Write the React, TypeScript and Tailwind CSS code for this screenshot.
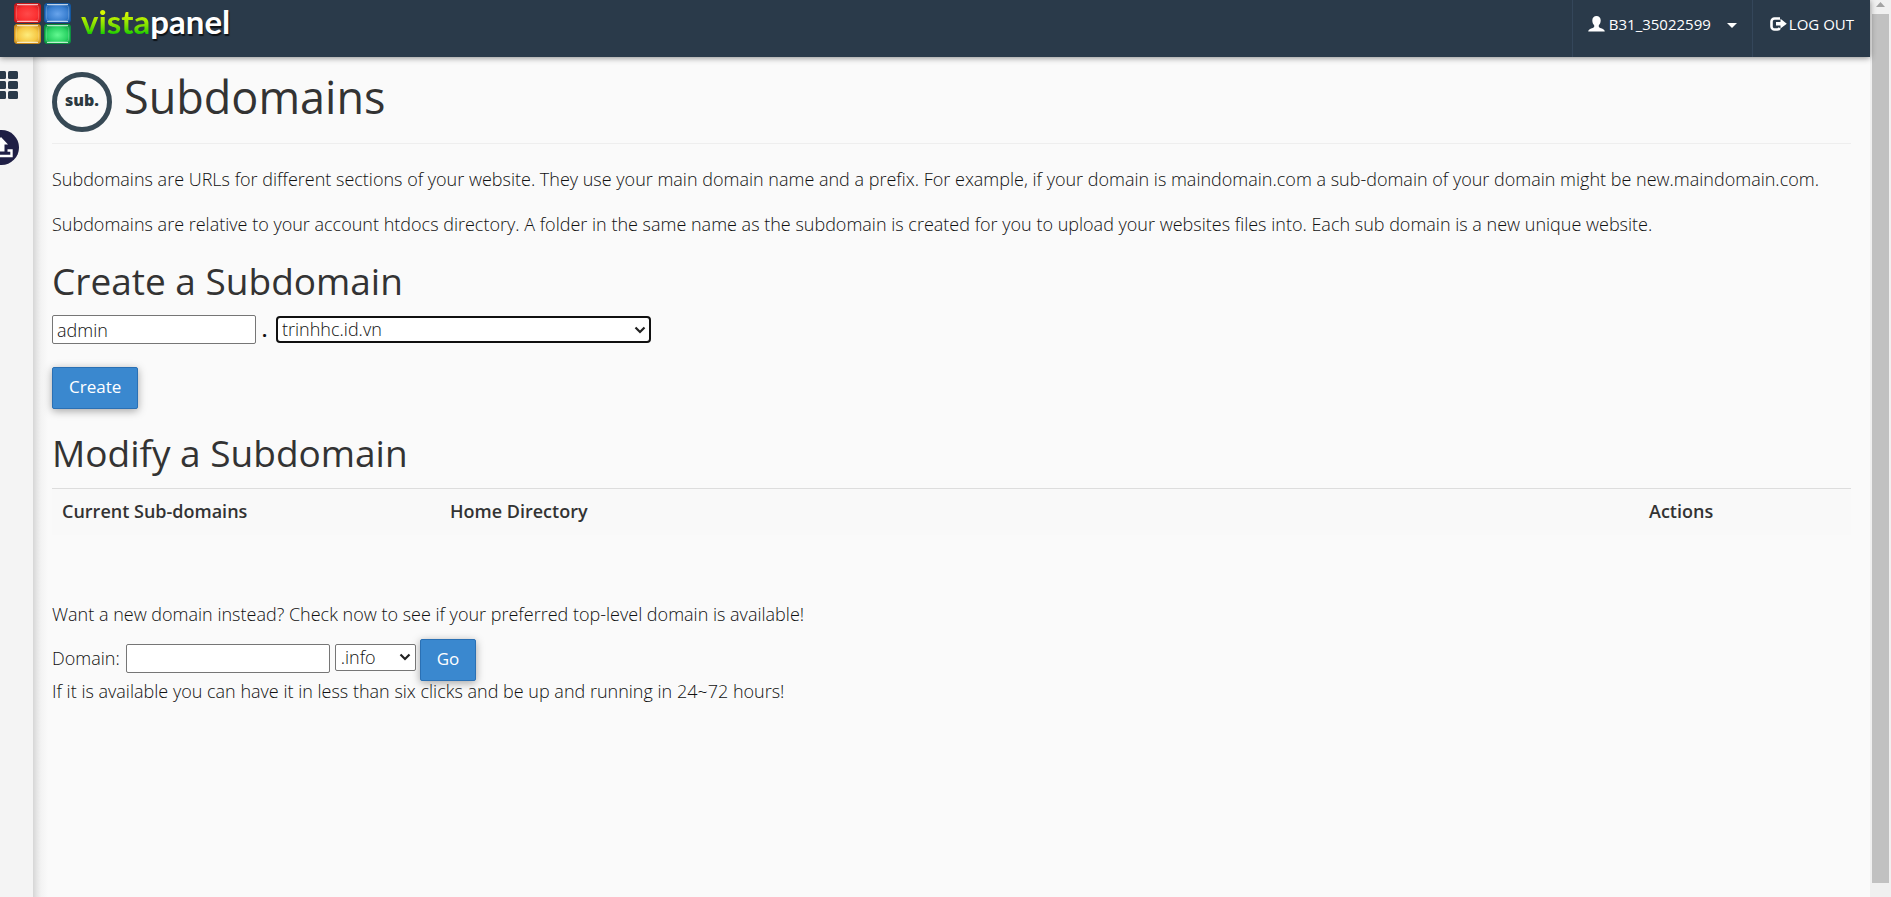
import type { ReactNode } from "react";

function VistaLogo() {
  const tiles = [
    { x: 0, y: 0, edge: "#c4191c", fill: "#fb2f31", mid: "#ff4a4a" },
    { x: 30, y: 0, edge: "#1457a0", fill: "#3a7fd0", mid: "#68a4ec" },
    { x: 0, y: 21, edge: "#c98a1c", fill: "#f6c845", mid: "#fdec7c" },
    { x: 30, y: 21, edge: "#0d9140", fill: "#2bd364", mid: "#62f890" },
  ];
  return (
    <svg width="57" height="42" viewBox="0 0 57 42" aria-hidden="true">
      {tiles.map((t, i) => (
        <g key={i}>
          <defs>
            <radialGradient id={`tile${i}`} cx="50%" cy="55%" r="65%">
              <stop offset="0" stopColor={t.mid} />
              <stop offset="0.6" stopColor={t.fill} />
              <stop offset="1" stopColor={t.edge} />
            </radialGradient>
          </defs>
          <rect x={t.x + 0.5} y={t.y + 0.5} width="26" height="19" rx="2.5" fill={`url(#tile${i})`} stroke={t.edge} />
          <path d={`M${t.x + 3} ${t.y + 1.5}h21M${t.x + 3} ${t.y + 18.5}h21`} stroke="#fff" strokeOpacity="0.7" />
          <rect x={t.x + 2.5} y={t.y + 2.5} width="22" height="15" rx="2" fill="none" stroke="#fff" strokeOpacity="0.18" />
        </g>
      ))}
    </svg>
  );
}

function UserIcon() {
  return (
    <svg width="17" height="16" viewBox="0 0 17 16" fill="currentColor" aria-hidden="true">
      <path d="M8.500 0C6 0 4.300 1.700 4.300 4.200c0 2 .7 4 1.900 5.100v1.500c-.2.700-1 1-2.300 1.500C2 13 .4 13.600.2 15.500h16.600c-.2-1.900-1.800-2.500-3.700-3.200-1.300-.5-2.100-.8-2.300-1.500V9.300c1.200-1.100 1.900-3.100 1.900-5.100C12.700 1.700 11 0 8.500 0z" />
    </svg>
  );
}

function LogoutIcon() {
  return (
    <svg width="17" height="14" viewBox="0 0 17 14" aria-hidden="true">
      <path d="M10 1.500H4.500a3 3 0 0 0-3 3v5a3 3 0 0 0 3 3H7a3 3 0 0 0 2.800-1.500" fill="none" stroke="currentColor" strokeWidth="2.600" />
      <path d="M6 5h4.500V1.800L16.800 6.700l-6.300 4.900V8.500H6z" fill="currentColor" />
    </svg>
  );
}

function GridIcon() {
  return (
    <svg width="19" height="28" viewBox="0 0 19 28" fill="#2a3a4a" aria-hidden="true">
      {[-4, 8].map((x) => [0, 10, 20].map((y) => <rect key={`${x}-${y}`} x={x} y={y} width="10" height="8" rx="1.500" />))}
    </svg>
  );
}

function UploadIcon() {
  return (
    <svg width="19" height="35" viewBox="16 0 19 35" aria-hidden="true">
      <circle cx="17.500" cy="17.500" r="17.500" fill="#1f1f45" />
      <path d="M17 7l7 7.500h-3.500v7h-7v-7H10z" fill="#fff" />
      <path d="M6.500 26h21v-5.500h-4" fill="none" stroke="#fff" strokeWidth="2.400" />
    </svg>
  );
}

function Chevron() {
  return (
    <svg
      className="pointer-events-none absolute top-1/2 right-1 -translate-y-1/2"
      width="14"
      height="10"
      viewBox="0 0 14 10"
      aria-hidden="true"
    >
      <path d="M2.500 2.500L7 7l4.500-4.500" fill="none" stroke="#222" strokeWidth="2.200" />
    </svg>
  );
}

function BlueButton({ children }: { children: ReactNode }) {
  return (
    <button
      type="button"
      className="h-[42px] rounded-xs border border-[#2a70b4] bg-[#3a88cf] px-4 pb-[2px] text-[17px] font-normal text-white shadow-[0_2px_8px_rgba(0,0,0,0.35)]"
    >
      {children}
    </button>
  );
}

export default function App() {
  return (
    <div className="flex h-screen overflow-hidden bg-[#fafafa] font-['Open_Sans',sans-serif] text-[18px] leading-[26px] font-light text-[#111]">
      <div className="flex min-w-0 flex-1 flex-col">
        <header className="relative z-10 flex h-[57px] shrink-0 justify-between bg-[#2a3a4a] shadow-[0_1px_6px_rgba(0,0,0,0.45)]">
          <a href="#" className="flex items-start gap-[10px] pt-[3px] pl-[14px]" aria-label="vistapanel">
            <VistaLogo />
            <span className="font-[Lato,sans-serif] text-[33px] leading-[37px] font-bold text-white [text-shadow:1px_2px_1px_rgba(0,0,0,0.7)]">
              <span className="bg-linear-to-b from-[#d8f800] from-30% to-[#1fd000] to-80% bg-clip-text text-transparent [text-shadow:none]">
                vista
              </span>
              panel
            </span>
          </a>
          <nav className="flex text-[15px] leading-[48px] font-medium text-white">
            <a href="#" className="flex border-l border-[#34465a] px-[15px]">
              <span className="flex items-center gap-1 self-start">
                <UserIcon />
                B31_35022599
              </span>
              <svg className="mt-[23px] ml-4" width="10" height="5" viewBox="0 0 10 5" aria-hidden="true">
                <path d="M0 0h10L5 5z" fill="#fff" />
              </svg>
            </a>
            <a href="#" className="flex border-l border-[#34465a] pr-4 pl-[17px]">
              <span className="flex items-center gap-[2px] self-start">
                <LogoutIcon />
                LOG OUT
              </span>
            </a>
          </nav>
        </header>

        <div className="flex min-h-0 flex-1">
          <aside className="flex w-[33px] shrink-0 flex-col items-start gap-[31px] bg-[#f4f4f4] pt-[14px]">
            <a href="#" aria-label="Dashboard">
              <GridIcon />
            </a>
            <a href="#" aria-label="Upload">
              <UploadIcon />
            </a>
          </aside>

          <main className="min-w-0 flex-1 bg-[linear-gradient(to_right,#d6d6d6,#e6e6e6_4px,#f3f3f3_8px,#fafafa_15px)] px-[19px] pt-[15px]">
            <div className="flex items-start gap-3 border-b border-[#eee] pb-[11px]">
              <svg width="60" height="60" viewBox="0 0 60 60" aria-hidden="true">
                <circle cx="30" cy="30" r="27.500" fill="none" stroke="#374955" strokeWidth="5" />
                <text x="30" y="34" textAnchor="middle" fontFamily="Open Sans" fontWeight="800" fontSize="16" fill="#2c3940">
                  sub.
                </text>
              </svg>
              <h1 className="text-[45px] leading-[50px] font-normal text-[#333]">Subdomains</h1>
            </div>

            <p className="mt-[22px]">
              Subdomains are URLs for different sections of your website. They use your main domain name and a prefix. For
              example, if your domain is maindomain.com a sub-domain of your domain might be new.maindomain.com.
            </p>
            <p className="mt-[19px]">
              Subdomains are relative to your account htdocs directory. A folder in the same name as the subdomain is
              created for you to upload your websites files into. Each sub domain is a new unique website.
            </p>

            <h2 className="mt-[23px] text-[37px] leading-[42px] font-normal text-[#333]">Create a Subdomain</h2>
            <div className="mt-[13px] flex items-center">
              <input
                aria-label="Subdomain"
                defaultValue="admin"
                className="h-[29px] w-[204px] rounded-xs border border-[#767676] bg-white px-1"
              />
              <b className="w-5 pl-[6px] font-bold">.</b>
              <span className="relative">
                <select
                  aria-label="Domain"
                  className="block h-[27px] w-[375px] appearance-none rounded-[4px] border-2 border-[#101010] bg-white px-1 leading-[23px]"
                >
                  <option>trinhhc.id.vn</option>
                </select>
                <Chevron />
              </span>
            </div>
            <div className="mt-[23px]">
              <BlueButton>Create</BlueButton>
            </div>

            <h2 className="mt-[23px] text-[37px] leading-[42px] font-normal text-[#333]">Modify a Subdomain</h2>
            <table className="mt-[14px] w-full border-t border-[#ddd] bg-[#f9f9f9] text-left text-[#333]">
              <thead>
                <tr className="h-[46px]">
                  <th className="w-[388px] px-[10px] pb-[2px] font-semibold">Current Sub-domains</th>
                  <th className="px-[10px] pb-[2px] font-semibold">Home Directory</th>
                  <th className="w-[212px] px-[10px] pb-[2px] font-semibold">Actions</th>
                </tr>
              </thead>
            </table>

            <p className="mt-[66px]">
              Want a new domain instead? Check now to see if your preferred top-level domain is available!
            </p>
            <div className="mt-3 flex">
              <label htmlFor="new-domain" className="mt-[6px] mr-[6px]">
                Domain:
              </label>
              <input
                id="new-domain"
                className="mt-[5px] mr-[5px] h-[29px] w-[204px] rounded-xs border border-[#767676] bg-white px-1"
              />
              <span className="relative mt-[5px] mr-1 h-[27px]">
                <select
                  aria-label="Extension"
                  className="block h-[27px] w-[81px] appearance-none rounded-xs border border-[#767676] bg-white px-[5px] leading-[25px]"
                >
                  <option>.info</option>
                </select>
                <Chevron />
              </span>
              <BlueButton>Go</BlueButton>
            </div>
            <p className="-mt-[3px]">
              If it is available you can have it in less than six clicks and be up and running in 24~72 hours!
            </p>
          </main>
        </div>
      </div>

      <div className="flex w-[21px] shrink-0 flex-col items-center bg-[#f0f0f0] pb-[14px]" aria-hidden="true">
        <svg width="17" height="14" viewBox="0 0 17 14">
          <path d="M4 7l4.500-5L13 7z" fill="#a3a3a3" />
        </svg>
        <div className="w-[17px] flex-1 bg-[#c1c1c1]" />
      </div>
    </div>
  );
}
